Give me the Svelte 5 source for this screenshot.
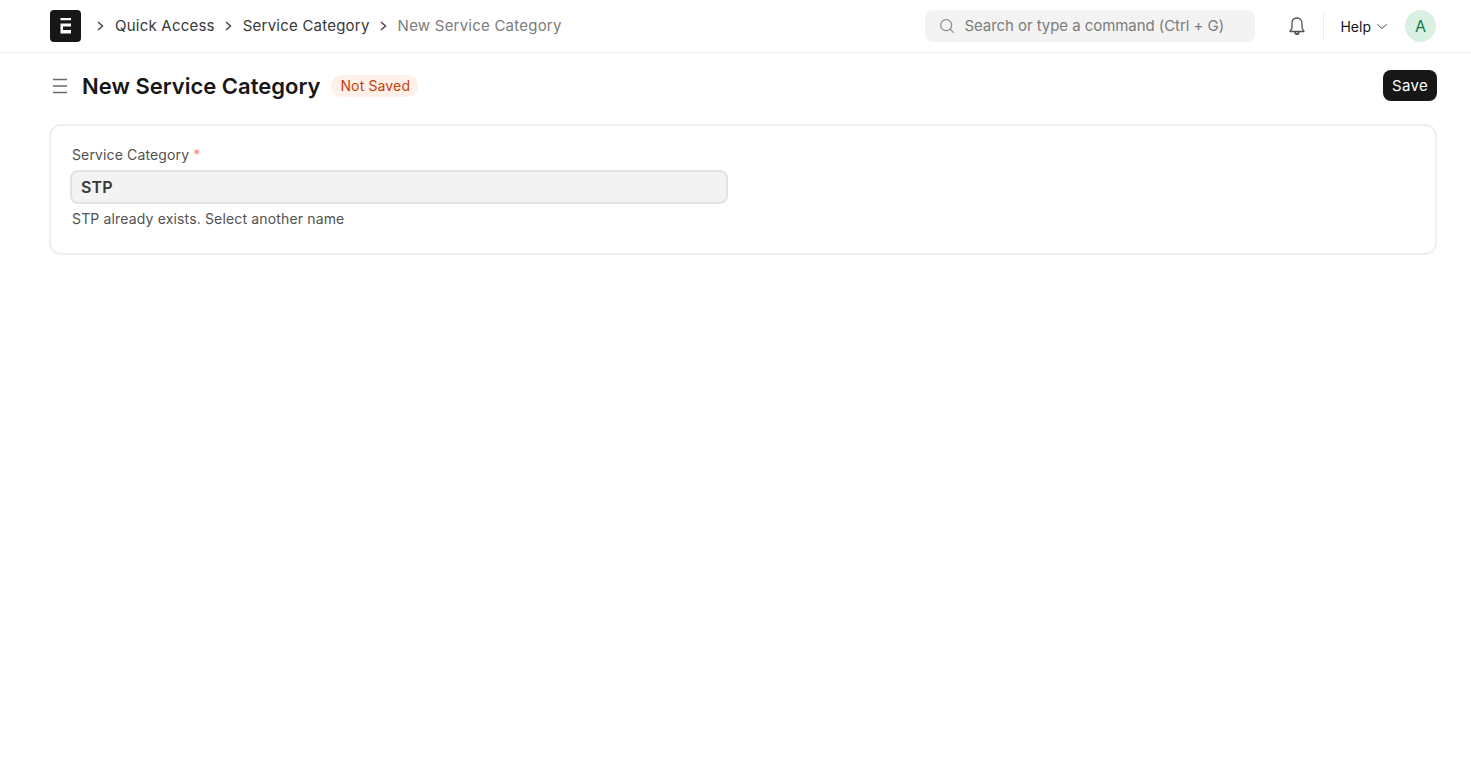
<script>
    let crumbs = ['Quick Access', 'Service Category'];
</script>

<header class="navbar">
    <div class="nav-inner">
        <a class="logo" href="#home" aria-label="Home">
            <svg width="31" height="32" viewBox="0 0 31 32">
                <rect width="31" height="32" rx="4" fill="#171717" />
                <path d="M10.500 8h10.500v2.200H10.500zM10.500 13.500h10.500v3h-8v3.500h8v3.500H10.500z" fill="#fff" />
            </svg>
        </a>
        <nav class="crumbs">
            {#each crumbs as crumb}
                <svg class="chev" width="10" height="10" viewBox="0 0 10 10"><path d="M3 1 7.500 5 3 9" /></svg>
                <span class="crumb">{crumb}</span>
            {/each}
            <svg class="chev" width="10" height="10" viewBox="0 0 10 10"><path d="M3 1 7.500 5 3 9" /></svg>
            <span class="crumb current">New Service Category</span>
        </nav>
        <div class="search">
            <svg width="16" height="16" viewBox="0 0 16 16" fill="none" stroke="#8a8a8a" stroke-width="1.2" stroke-linecap="round">
                <circle cx="7.2" cy="7.2" r="5.500" />
                <path d="m11.300 11.300 3 3" />
            </svg>
            <span>Search or type a command (Ctrl + G)</span>
        </div>
        <button class="bell" aria-label="Notifications">
            <svg width="20" height="20" viewBox="0 0 20 20" fill="none" stroke="#525252" stroke-width="1.3" stroke-linejoin="round">
                <path d="M10 2c-3.200 0-5 2.400-5 5.500v3.900c0 1.600-1.100 2.600-1.900 3.500-.2.300 0 .6.300.6h13.200c.3 0 .5-.3.300-.6-.8-.9-1.900-1.900-1.900-3.500V7.500C15 4.400 13.200 2 10 2Z" />
                <path d="M8.200 16c0 1.200.7 2.200 1.800 2.200s1.800-1 1.800-2.200" stroke-width="1.800" />
            </svg>
        </button>
        <div class="divider"></div>
        <button class="help">
            Help
            <svg width="12" height="12" viewBox="0 0 12 12" fill="none" stroke="#525252" stroke-width="1" stroke-linecap="round"><path d="m1.500 4.500 4.500 4 4.500-4" /></svg>
        </button>
        <div class="avatar">A</div>
    </div>
</header>

<main class="page">
    <div class="page-head">
        <svg class="menu" width="18" height="18" viewBox="0 0 18 18" fill="none" stroke="#6b6b6b" stroke-width="1.400">
            <path d="M2 2.500h14M2 9h14M2 15.500h14" />
        </svg>
        <h1>New Service Category</h1>
        <span class="badge">Not Saved</span>
        <button class="save">Save</button>
    </div>

    <section class="card">
        <label class="label" for="service-category">Service Category <span class="req">*</span></label>
        <input id="service-category" class="field" value="STP" readonly />
        <p class="help-text">STP already exists. Select another name</p>
    </section>
</main>

<style>
    :global(body) {
        background: #fff;
        font-family: Inter, 'Liberation Sans', sans-serif;
        color: #171717;
    }

    .navbar {
        height: 52px;
        border-bottom: 1px solid #ededed;
    }

    .nav-inner {
        display: flex;
        align-items: center;
        height: 100%;
        padding: 0 35px 0 50px;
    }

    .logo {
        display: flex;
        margin-right: 14px;
    }

    .crumbs {
        display: flex;
        align-items: center;
        font-size: 15px;
        letter-spacing: 0.015em;
        flex: 1;
        margin-top: -1px;
    }

    .chev {
        fill: none;
        stroke: #525252;
        stroke-width: 1.600;
        margin: 1px 10px 0 0;
    }

    .crumb {
        color: #383838;
        margin-right: 8px;
    }

    .current {
        color: #7c7c7c;
    }

    .search {
        display: flex;
        align-items: center;
        gap: 9px;
        width: 330px;
        height: 32px;
        box-sizing: border-box;
        padding-left: 14px;
        background: #f3f3f3;
        border-radius: 8px;
        font-size: 15px;
        letter-spacing: -0.004em;
        color: #7c7c7c;
    }

    .search span {
        margin-top: -1px;
    }

    button {
        border: 0;
        background: none;
        padding: 0;
        font: inherit;
    }

    .bell {
        display: flex;
        margin-left: 32px;
    }

    .divider {
        width: 1px;
        height: 28px;
        background: #ededed;
        margin: 0 16px 0 16px;
    }

    .help {
        display: flex;
        align-items: center;
        gap: 5px;
        font-size: 14px;
        color: #171717;
    }

    .avatar {
        display: flex;
        align-items: center;
        justify-content: center;
        width: 31px;
        height: 32px;
        border-radius: 50%;
        margin-left: 17px;
        background: #d9f0e2;
        color: #137a4b;
        font-size: 16px;
    }

    .page {
        padding: 0 34px 0 49px;
    }

    .page-head {
        display: flex;
        align-items: center;
        height: 66px;
    }

    .menu {
        margin: 0 13px 0 2px;
    }

    h1 {
        margin: 0;
        font-size: 22px;
        font-weight: 600;
        color: #171717;
    }

    .badge {
        margin-left: 11px;
        padding: 0 8px 0 9px;
        height: 22px;
        line-height: 22px;
        border-radius: 11px;
        background: #fff0e8;
        color: #c4400c;
        font-size: 14px;
        letter-spacing: 0.01em;
    }

    .save {
        margin: 0 0 2px auto;
        width: 54px;
        height: 31px;
        border-radius: 8px;
        background: #171717;
        color: #fff;
        font-size: 15px;
        letter-spacing: 0.02em;
    }

    .card {
        box-sizing: border-box;
        height: 131px;
        margin-top: 5px;
        padding: 20px 21px 0;
        border: 2px solid #efefef;
        border-radius: 12px;
    }

    .label {
        display: block;
        font-size: 14px;
        letter-spacing: 0.01em;
        line-height: 17px;
        color: #525252;
    }

    .req {
        color: #e8897a;
    }

    .field {
        display: block;
        box-sizing: border-box;
        width: 658px;
        height: 34px;
        margin: 7px 0 0 -2px;
        padding: 0 9px;
        border: 2px solid #e2e2e2;
        border-radius: 8px;
        background: #f3f3f3;
        outline: none;
        font-family: inherit;
        font-size: 16px;
        font-weight: 600;
        letter-spacing: 0.01em;
        color: #383838;
    }

    .help-text {
        margin: 6px 0 0;
        font-size: 14px;
        letter-spacing: 0.011em;
        line-height: 17px;
        color: #525252;
    }
</style>
